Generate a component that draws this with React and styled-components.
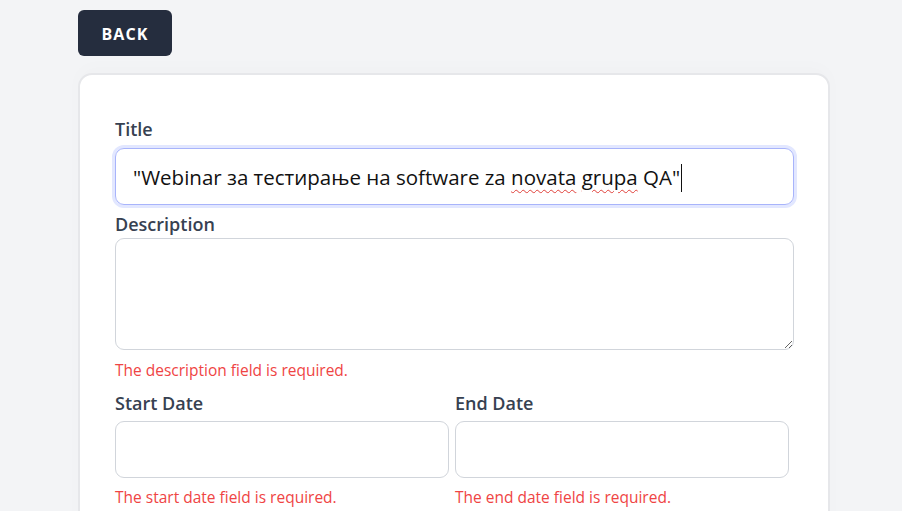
import React from 'react';
import styled, { createGlobalStyle } from 'styled-components';

const GlobalStyle = createGlobalStyle`
  html, body {
    margin: 0;
    padding: 0;
    background: #f3f4f6;
    font-family: "Open Sans", "Noto Sans", Arial, sans-serif;
  }
`;

const Page = styled.div`
  min-height: 511px;
  padding: 10px 0 0 78px;
  box-sizing: border-box;
  overflow: hidden;
`;

const Column = styled.div`
  width: 752px;
  display: flex;
  flex-direction: column;
  align-items: flex-start;
  gap: 17px;
`;

const BackButton = styled.button`
  width: 94px;
  height: 46px;
  padding: 2px 0 0;
  border: none;
  border-radius: 6px;
  background: #252d3e;
  color: #ffffff;
  font-family: inherit;
  font-size: 16px;
  font-weight: 700;
  letter-spacing: 1.1px;
  cursor: pointer;
`;

const Card = styled.form`
  width: 100%;
  box-sizing: border-box;
  background: #ffffff;
  border: 2px solid #e6e7ea;
  border-radius: 14px;
  padding: 42px 34px 60px 35px;
  box-shadow: 0 -6px 18px rgba(0, 0, 0, 0.015);
`;

const Label = styled.label`
  display: block;
  color: #374151;
  font-size: 18px;
  font-weight: 600;
  line-height: 24px;
  margin-top: ${({ $top }) => $top ?? 0}px;
  margin-bottom: ${({ $gap }) => $gap ?? 6}px;
`;

const FocusedField = styled.div`
  height: 57px;
  box-sizing: border-box;
  border: 1px solid #a8b4fb;
  border-radius: 9px;
  box-shadow: 0 0 0 3px #e2e7ff;
  padding: 0 17px;
  display: flex;
  align-items: center;
  font-size: 20.5px;
  color: #111111;
`;

const FieldText = styled.span`
  white-space: pre;
  line-height: 30px;
`;

const Misspelled = styled.span`
  text-decoration: underline wavy #e0403a;
  text-decoration-thickness: 1px;
  text-underline-offset: 4px;
`;

const Caret = styled.span`
  display: inline-block;
  width: 1px;
  height: 28px;
  background: #111111;
  margin-left: 1px;
  vertical-align: -7px;
`;

const TextArea = styled.textarea`
  display: block;
  width: 100%;
  height: 112px;
  box-sizing: border-box;
  border: 1px solid #d1d5db;
  border-radius: 9px;
  font-family: inherit;
  font-size: 16px;
  padding: 10px 14px;
  resize: vertical;
  outline: none;
`;

const Error = styled.p`
  margin: ${({ $top }) => $top ?? 9}px 0 0;
  color: #ef4444;
  font-size: 15.5px;
  line-height: 22px;
`;

const Row = styled.div`
  display: grid;
  grid-template-columns: 334px 334px;
  column-gap: 6px;
  margin-top: 10px;
`;

const DateInput = styled.input`
  display: block;
  width: 100%;
  height: 57px;
  box-sizing: border-box;
  border: 1px solid #d1d5db;
  border-radius: 9px;
  font-family: inherit;
  font-size: 16px;
  padding: 0 14px;
  outline: none;
`;

export default function App() {
  return (
    <>
      <GlobalStyle />
      <Page>
        <Column>
          <BackButton type="button">BACK</BackButton>
          <Card onSubmit={(e) => e.preventDefault()}>
            <Label $gap={7}>Title</Label>
            <FocusedField role="textbox">
              <FieldText>
                "Webinar за тестирање на software za <Misspelled>novata</Misspelled>{' '}
                <Misspelled>grupa</Misspelled> QA"
                <Caret />
              </FieldText>
            </FocusedField>

            <Label $top={7} $gap={2}>Description</Label>
            <TextArea />
            <Error>The description field is required.</Error>

            <Row>
              <div>
                <Label>Start Date</Label>
                <DateInput type="text" />
                <Error $top={8}>The start date field is required.</Error>
              </div>
              <div>
                <Label>End Date</Label>
                <DateInput type="text" />
                <Error $top={8}>The end date field is required.</Error>
              </div>
            </Row>
          </Card>
        </Column>
      </Page>
    </>
  );
}
